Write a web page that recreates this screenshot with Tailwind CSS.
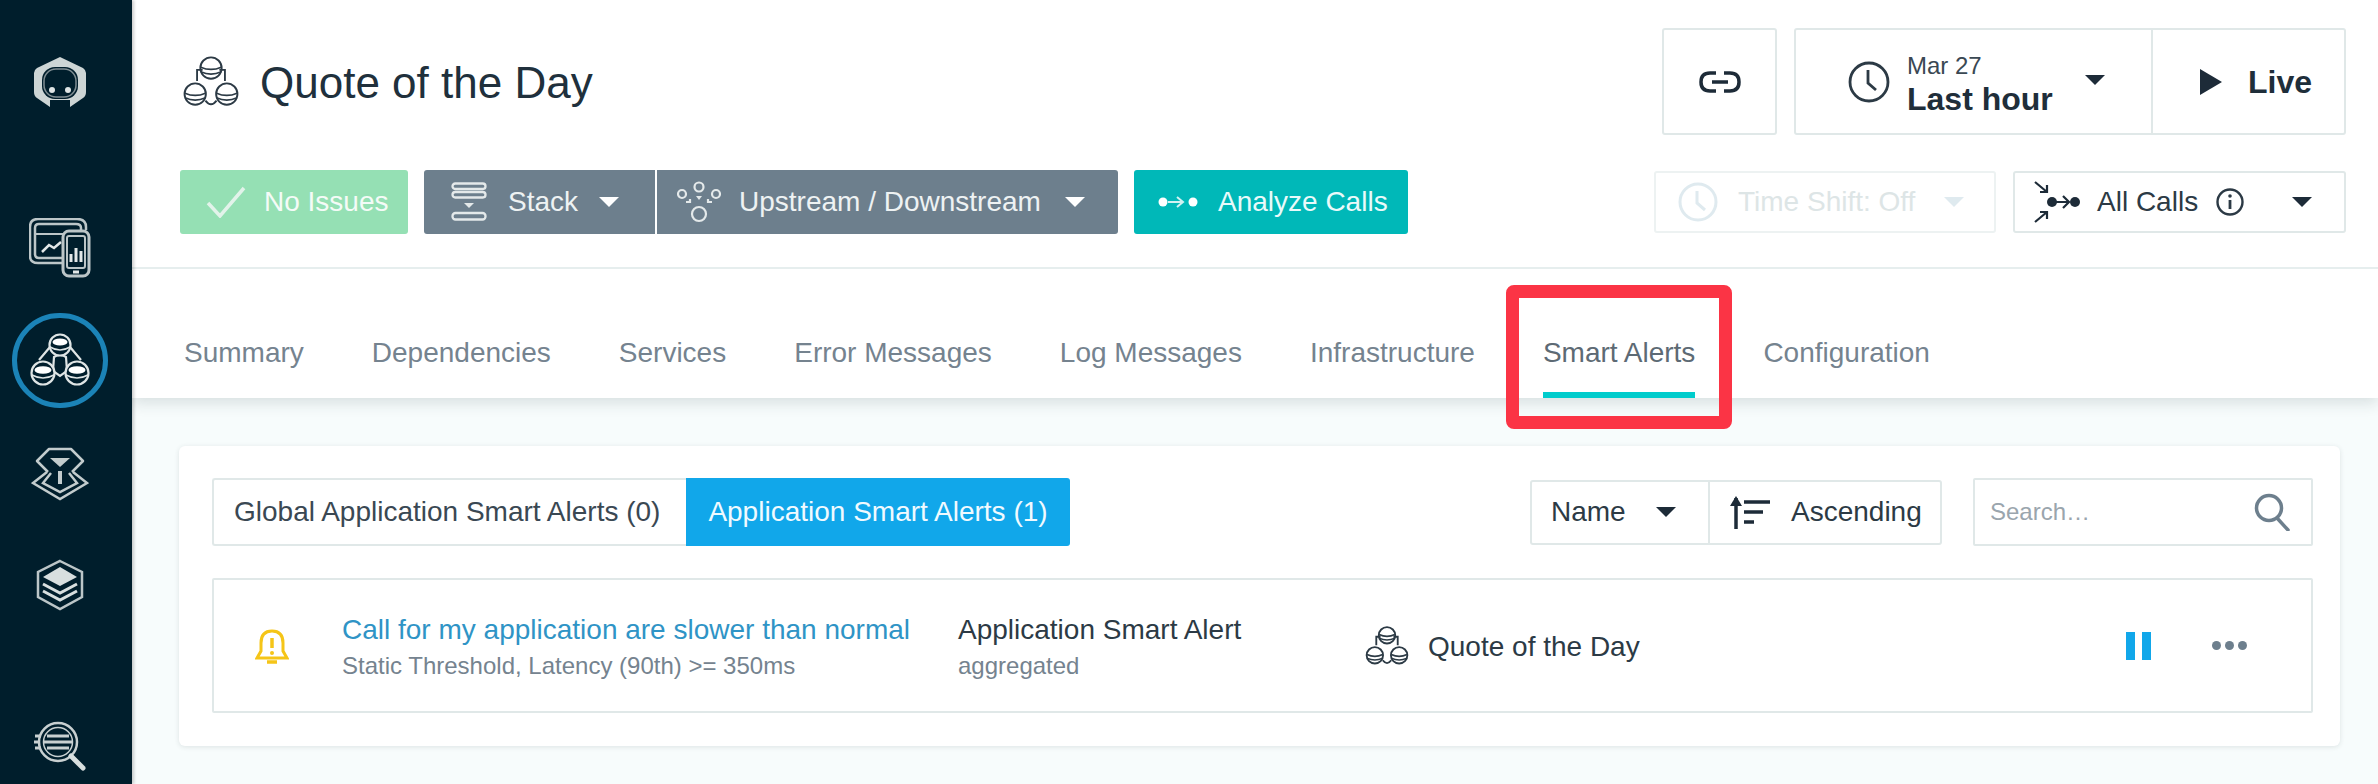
<!DOCTYPE html>
<html lang="en">
<head>
<meta charset="UTF-8">
<title>Quote of the Day - Smart Alerts</title>
<script src="https://cdn.jsdelivr.net/npm/@tailwindcss/browser@4"></script>
</head>
<body class="flex h-[784px] w-[2378px] overflow-hidden bg-[#f7fcfc] whitespace-nowrap text-[#1d2b38] [font-family:'Liberation_Sans',Arial,sans-serif]">

<!-- sidebar -->
<nav class="z-20 flex h-full w-[132px] shrink-0 flex-col items-center bg-[#001e2c] pr-[12px] shadow-[2px_0_3px_rgba(0,0,0,0.2)]">
  <svg class="mt-[56px]" width="54" height="54" viewBox="0 0 54 54">
    <path d="M27 1 L50 12 Q53 14 53 17 V36 Q53 40 50 42 L37 51 V44 H17 V51 L4 42 Q1 40 1 36 V17 Q1 14 4 12 Z" fill="#cdd5d5"/>
    <rect x="9" y="11" width="36" height="32" rx="13" fill="#001e2c"/>
    <rect x="11" y="13" width="32" height="28" rx="12" fill="none" stroke="#7f8d92" stroke-width="1.5"/>
    <circle cx="19" cy="34" r="3" fill="#dfe5e5"/><circle cx="35" cy="34" r="3" fill="#dfe5e5"/>
  </svg>
  <svg class="mt-[108px]" width="62" height="60" viewBox="0 0 62 60" fill="none" stroke="#bcc6c8" stroke-width="2.5">
    <path d="M36 45 H9 Q1 45 1 38 V9 Q1 1 9 1 H48 Q57 1 57 9 V12"/>
    <path d="M36 40 H10 Q6 40 6 36 V10 Q6 6 10 6 H47 Q52 6 52 10 V13"/>
    <path d="M6 16 H34" stroke-width="2"/>
    <path d="M13 34 L20 27 L25 30 L32 24" stroke="#e3e8e8"/>
    <rect x="34" y="13" width="26" height="45" rx="6" fill="#001e2c" stroke-width="3"/>
    <rect x="38" y="18" width="18" height="32" rx="2" stroke-width="2"/>
    <path d="M42 44 V36 M47 44 V30 M52 44 V33 M44 54 H50" stroke="#e3e8e8" stroke-width="3"/>
  </svg>
  <div class="mt-[35px] flex h-[95px] w-[96px] items-center justify-center rounded-full border-[5px] border-[#1b83b7]">
    <svg width="60" height="56" viewBox="0 0 60 56" fill="none" stroke="#dfe5e5" stroke-width="2.2">
      <path d="M20 14 L9 27 M40 14 L51 27 M24 24 Q30 20 36 24 L37 38 L30 43 L23 38 Z"/>
      <circle cx="30" cy="12" r="10.5" fill="#001e2c"/><ellipse cx="30" cy="9" rx="7.5" ry="3.6" fill="#fff" stroke="none"/><path d="M20 14 Q30 20 40 14" stroke-width="1.6"/>
      <circle cx="13" cy="40" r="11.5" fill="#001e2c"/><ellipse cx="13" cy="37" rx="8.5" ry="3.8" fill="#fff" stroke="none"/><path d="M2 42 Q13 48 24 42" stroke-width="1.6"/>
      <circle cx="47" cy="40" r="11.5" fill="#001e2c"/><ellipse cx="47" cy="37" rx="8.5" ry="3.8" fill="#fff" stroke="none"/><path d="M36 42 Q47 48 58 42" stroke-width="1.6"/>
    </svg>
  </div>
  <svg class="mt-[39px]" width="58" height="54" viewBox="0 0 58 54" fill="none" stroke="#c3cccd" stroke-width="2.5">
    <path d="M17 25 L6 14 L18 2 H40 L52 14 L41 25" stroke-linejoin="round"/>
    <path d="M19 11 H39 L29 20 Z" fill="#c3cccd" stroke="none"/>
    <path d="M16 25 L2 36 L29 52 L56 36 L42 25"/>
    <path d="M20 26 L12 36 L29 45 L46 36 L38 26"/>
    <path d="M29 24 V37" stroke-width="4"/>
  </svg>
  <svg class="mt-[58px]" width="48" height="52" viewBox="0 0 48 52">
    <path d="M24 2 L46 13 V38 L24 50 L2 38 V13 Z" fill="none" stroke="#bcc6c8" stroke-width="2.5"/>
    <path d="M24 8 L41 18 L24 27 L7 18 Z" fill="#d8dfdf"/>
    <path d="M7 25 L24 34 L41 25 M7 32 L24 41 L41 32" fill="none" stroke="#d8dfdf" stroke-width="3"/>
  </svg>
  <svg class="mt-[110px]" width="52" height="50" viewBox="0 0 52 50" fill="none" stroke="#c8d0d1" stroke-width="2.5">
    <circle cx="24" cy="21" r="19"/>
    <circle cx="24" cy="21" r="14.5" stroke-width="1.5"/>
    <path d="M13 15 H35 M10 21 H38 M13 27 H35 M1 15 H7 M0 21 H5 M1 27 H7" stroke-width="3"/>
    <path d="M37 35 L49 47" stroke-width="5" stroke-linecap="round" stroke="#d8dfdf"/>
  </svg>
</nav>

<div class="relative flex min-w-0 grow flex-col">
  <!-- header -->
  <header class="z-10 h-[398px] shrink-0 bg-white shadow-[0_5px_14px_rgba(30,50,60,0.14)]">
    <div class="h-[269px] border-b-2 border-[#e6eeee] pt-[28px] pr-[32px] pl-[50px]">
      <div class="flex h-[107px] items-center justify-between">
        <div class="flex items-center">
          <svg class="shrink-0" width="58" height="52" viewBox="0 0 60 56" fill="none" stroke="#2c3a45" stroke-width="2">
            <path d="M21 15 H15 V27 M39 15 H45 V27 M24 48 Q30 56 36 48"/>
            <circle cx="30" cy="13" r="11.5"/><path d="M19 12 Q30 17 41 12 M19 17 Q30 22 41 17" stroke-width="1.8"/>
            <circle cx="13" cy="41" r="11.5"/><path d="M2 40 Q13 45 24 40 M2 45 Q13 50 24 45" stroke-width="1.8"/>
            <circle cx="47" cy="41" r="11.5"/><path d="M36 40 Q47 45 58 40 M36 45 Q47 50 58 45" stroke-width="1.8"/>
          </svg>
          <h1 class="mt-[2px] ml-[20px] text-[44px] font-normal text-[#20303c]">Quote of the Day</h1>
        </div>
        <div class="flex items-center">
          <div class="mr-[17px] flex h-[107px] w-[115px] items-center justify-center rounded-[3px] border-2 border-[#e0e8e8]">
            <svg width="42" height="22" viewBox="0 0 42 22" fill="none" stroke="#1d2b38" stroke-width="3.5">
              <path d="M17 2 H11 Q2 2 2 11 Q2 20 11 20 H17 M25 2 H31 Q40 2 40 11 Q40 20 31 20 H25 M13 11 H29"/>
            </svg>
          </div>
          <div class="flex h-[107px] w-[552px] items-center rounded-[3px] border-2 border-[#e0e8e8]">
            <div class="flex h-full w-[357px] items-center border-r-2 border-[#e0e8e8] pl-[52px]">
              <svg class="shrink-0" width="42" height="42" viewBox="0 0 42 42" fill="none" stroke="#2c3a45" stroke-width="2.8">
                <circle cx="21" cy="21" r="19"/><path d="M20 9 V22 L28 29"/>
              </svg>
              <div class="mt-[6px] ml-[17px] w-[178px]">
                <div class="text-[24px] leading-[28px] text-[#3a4853]">Mar 27</div>
                <div class="text-[32px] leading-[38px] font-bold text-[#1f2e3a]">Last hour</div>
              </div>
              <div class="mb-[4px] h-0 w-0 border-x-[10px] border-t-[10px] border-x-transparent border-t-[#1d2b38]"></div>
            </div>
            <div class="flex items-center pl-[47px]">
              <div class="h-0 w-0 border-y-[13px] border-l-[22px] border-y-transparent border-l-[#1d2b38]"></div>
              <div class="ml-[26px] text-[32px] font-bold text-[#1f2e3a]">Live</div>
            </div>
          </div>
        </div>
      </div>
      <div class="mt-[35px] -ml-[2px] flex h-[64px] items-center justify-between">
        <div class="flex items-center text-[28px]">
          <div class="flex h-[64px] w-[228px] items-center rounded-[3px] bg-[#95e0b4] pl-[26px] text-[#f4fbf7]">
            <svg class="shrink-0" width="40" height="32" viewBox="0 0 40 32" fill="none" stroke="#e2f3ea" stroke-width="3.5"><path d="M2 17 L14 30 L38 2"/></svg>
            <span class="ml-[18px]">No Issues</span>
          </div>
          <div class="ml-[16px] flex h-[64px] w-[231px] items-center rounded-l-[3px] bg-[#6d7f8d] pl-[27px] text-[#eef2f3]">
            <svg class="shrink-0" width="36" height="40" viewBox="0 0 36 40" fill="none" stroke="#e4e9ea" stroke-width="2.3">
              <rect x="1.5" y="1.5" width="33" height="5.5" rx="2.7"/><rect x="1.5" y="10" width="33" height="5.5" rx="2.7"/>
              <rect x="1.5" y="31" width="33" height="6.5" rx="3"/><path d="M13 21 H23 L18 26 Z" fill="#e4e9ea" stroke="none"/>
            </svg>
            <span class="ml-[21px]">Stack</span>
            <div class="ml-[21px] h-0 w-0 border-x-[10px] border-t-[10px] border-x-transparent border-t-white"></div>
          </div>
          <div class="ml-[2px] flex h-[64px] w-[461px] items-center rounded-r-[3px] bg-[#6d7f8d] pl-[20px] text-[#eef2f3]">
            <svg class="shrink-0" width="44" height="42" viewBox="0 0 44 42" fill="none" stroke="#e4e9ea" stroke-width="2.2">
              <circle cx="22" cy="6" r="4.5"/><circle cx="5" cy="13" r="4"/><circle cx="39" cy="13" r="4"/><circle cx="22" cy="33" r="7"/>
              <path d="M19 15 H25 L22 19 Z" fill="#e4e9ea" stroke="none"/><path d="M9 21 H13 V18 M35 21 H31 V18"/>
            </svg>
            <span class="ml-[18px]">Upstream / Downstream</span>
            <div class="ml-[24px] h-0 w-0 border-x-[10px] border-t-[10px] border-x-transparent border-t-white"></div>
          </div>
          <div class="ml-[16px] flex h-[64px] w-[274px] items-center rounded-[3px] bg-[#00b8b8] pl-[24px] text-[#e9fafa]">
            <svg class="shrink-0" width="40" height="16" viewBox="0 0 40 16">
              <circle cx="5" cy="8" r="4.5" fill="#fff"/><circle cx="35" cy="8" r="4.5" fill="#fff"/>
              <path d="M10 8 H24 M19 3 L25 8 L19 13" fill="none" stroke="#d2f2f2" stroke-width="2"/>
            </svg>
            <span class="ml-[20px]">Analyze Calls</span>
          </div>
        </div>
        <div class="flex items-center text-[28px]">
          <div class="flex h-[62px] w-[342px] items-center rounded-[3px] border-2 border-[#edf2f2] pl-[22px] text-[#dde5e6]">
            <svg class="shrink-0" width="40" height="40" viewBox="0 0 40 40" fill="none" stroke="#dfeaef" stroke-width="3">
              <circle cx="20" cy="20" r="18"/><path d="M19 9 V21 L27 28"/>
            </svg>
            <span class="ml-[20px]">Time Shift: Off</span>
            <div class="ml-[29px] h-0 w-0 border-x-[10px] border-t-[10px] border-x-transparent border-t-[#dfeaef]"></div>
          </div>
          <div class="ml-[17px] flex h-[62px] w-[333px] items-center rounded-[3px] border-2 border-[#e0e8e8] pl-[19px] text-[#2c3a45]">
            <svg class="shrink-0" width="46" height="42" viewBox="0 0 46 42" fill="none" stroke="#1d2b38" stroke-width="2.2">
              <path d="M1 1 L13 11 M13 4 V11 H6 M1 41 L13 31 M6 31 H13 V38"/>
              <circle cx="18" cy="21" r="5" fill="#1d2b38" stroke="none"/><circle cx="41" cy="21" r="5" fill="#1d2b38" stroke="none"/>
              <path d="M22 21 H34 M29 15 L35 21 L29 27"/>
            </svg>
            <span class="ml-[17px]">All Calls</span>
            <svg class="ml-[18px] shrink-0" width="28" height="28" viewBox="0 0 28 28" fill="none" stroke="#2c3a45" stroke-width="2.4">
              <circle cx="14" cy="14" r="12.5"/><path d="M14 12 V21" stroke-width="2.8"/><circle cx="14" cy="8" r="1.8" fill="#2c3a45" stroke="none"/>
            </svg>
            <div class="ml-[48px] h-0 w-0 border-x-[10px] border-t-[10px] border-x-transparent border-t-[#1d2b38]"></div>
          </div>
        </div>
      </div>
    </div>
    <!-- tabs -->
    <div class="flex h-[129px] gap-[68px] pl-[52px] text-[28px] text-[#75838f]">
      <div class="flex h-full items-center border-b-[6px] border-transparent pt-[44px]">Summary</div>
      <div class="flex h-full items-center border-b-[6px] border-transparent pt-[44px]">Dependencies</div>
      <div class="flex h-full items-center border-b-[6px] border-transparent pt-[44px]">Services</div>
      <div class="flex h-full items-center border-b-[6px] border-transparent pt-[44px]">Error Messages</div>
      <div class="flex h-full items-center border-b-[6px] border-transparent pt-[44px]">Log Messages</div>
      <div class="flex h-full items-center border-b-[6px] border-transparent pt-[44px]">Infrastructure</div>
      <div class="flex h-full items-center border-b-[6px] border-[#00cccc] pt-[44px] text-[#5d6a74]">Smart Alerts</div>
      <div class="flex h-full items-center border-b-[6px] border-transparent pt-[44px]">Configuration</div>
    </div>
  </header>

  <!-- card -->
  <main class="mt-[48px] ml-[47px] h-[300px] w-[2161px] rounded-[6px] bg-white pt-[32px] pr-[27px] pl-[33px] shadow-[0_1px_5px_rgba(30,50,60,0.12)]">
    <div class="flex h-[68px] items-center justify-between text-[28px]">
      <div class="flex h-[68px] items-stretch">
        <div class="flex w-[474px] items-center rounded-l-[3px] border-2 border-r-0 border-[#e0e8e8] pl-[20px] text-[#3a4853]">Global Application Smart Alerts (0)</div>
        <div class="flex w-[384px] items-center justify-center rounded-r-[3px] bg-[#11a7ea] text-[#f0faff]">Application Smart Alerts (1)</div>
      </div>
      <div class="flex items-center">
        <div class="flex h-[65px] w-[412px] items-center rounded-[3px] border-2 border-[#e0e8e8] text-[#2c3a45]">
          <div class="flex h-full w-[178px] items-center border-r-2 border-[#e0e8e8] pl-[19px]">
            <span>Name</span>
            <div class="ml-[30px] h-0 w-0 border-x-[10px] border-t-[10px] border-x-transparent border-t-[#1d2b38]"></div>
          </div>
          <div class="flex items-center pl-[20px]">
            <svg class="shrink-0" width="40" height="34" viewBox="0 0 40 34" fill="none" stroke="#1d2b38" stroke-width="3.5">
              <path d="M6 34 V3" stroke-width="3.5"/><path d="M0 11 L6 1 L12 11 Z" fill="#1d2b38" stroke="none"/>
              <path d="M14 7 H40 M14 17 H33 M14 27 H24"/>
            </svg>
            <span class="ml-[21px]">Ascending</span>
          </div>
        </div>
        <div class="ml-[31px] flex h-[68px] w-[340px] items-center justify-between rounded-[2px] border-2 border-[#e0e8e8] pr-[21px] pl-[15px]">
          <span class="text-[24px] text-[#9aa5ad]">Search…</span>
          <svg class="shrink-0" width="36" height="38" viewBox="0 0 36 38" fill="none" stroke="#6d7f8d" stroke-width="3.5">
            <circle cx="15" cy="15" r="12.5"/><path d="M23 25 L34 37" stroke-linecap="round"/>
          </svg>
        </div>
      </div>
    </div>
    <div class="mt-[32px] flex h-[135px] items-center rounded-[2px] border-2 border-[#e0e8e8]">
      <svg class="ml-[41px] shrink-0" width="34" height="38" viewBox="0 0 34 38" fill="none" stroke="#f5c518" stroke-width="3">
        <path d="M17 4 Q28 4 28 16 V24 L32 31 H2 L6 24 V16 Q6 4 17 4 Z"/>
        <path d="M17 11 V21" stroke-width="3.5"/><circle cx="17" cy="26" r="2" fill="#f5c518" stroke="none"/><path d="M12 35 H22" stroke-width="3.5"/>
      </svg>
      <div class="ml-[53px] w-[616px] pt-[2px]">
        <div class="text-[28px] leading-[34px] text-[#2f94c6]">Call for my application are slower than normal</div>
        <div class="mt-[5px] text-[24px] leading-[28px] text-[#75838f]">Static Threshold, Latency (90th) &gt;= 350ms</div>
      </div>
      <div class="w-[407px] pt-[2px]">
        <div class="text-[28px] leading-[34px] text-[#2c3a45]">Application Smart Alert</div>
        <div class="mt-[5px] text-[24px] leading-[28px] text-[#75838f]">aggregated</div>
      </div>
      <svg class="shrink-0" width="44" height="40" viewBox="0 0 60 56" fill="none" stroke="#2c3a45" stroke-width="2.6">
        <path d="M21 15 H15 V27 M39 15 H45 V27 M24 48 Q30 56 36 48"/>
        <circle cx="30" cy="13" r="11.5"/><path d="M19 12 Q30 17 41 12 M19 17 Q30 22 41 17" stroke-width="2.2"/>
        <circle cx="13" cy="41" r="11.5"/><path d="M2 40 Q13 45 24 40 M2 45 Q13 50 24 45" stroke-width="2.2"/>
        <circle cx="47" cy="41" r="11.5"/><path d="M36 40 Q47 45 58 40 M36 45 Q47 50 58 45" stroke-width="2.2"/>
      </svg>
      <div class="mt-[2px] ml-[19px] w-[698px] text-[28px] text-[#2c3a45]">Quote of the Day</div>
      <div class="flex h-[28px] gap-[7px]"><div class="w-[9px] bg-[#11a7ea]"></div><div class="w-[9px] bg-[#11a7ea]"></div></div>
      <div class="ml-[61px] flex gap-[4px]">
        <div class="h-[9px] w-[9px] rounded-full bg-[#6d7f8d]"></div><div class="h-[9px] w-[9px] rounded-full bg-[#6d7f8d]"></div><div class="h-[9px] w-[9px] rounded-full bg-[#6d7f8d]"></div>
      </div>
    </div>
  </main>

  <!-- red annotation over the Smart Alerts tab -->
  <div class="absolute top-[285px] left-[1374px] z-30 h-[144px] w-[226px] rounded-[8px] border-[13px] border-[#fb3445]"></div>
</div>
</body>
</html>
